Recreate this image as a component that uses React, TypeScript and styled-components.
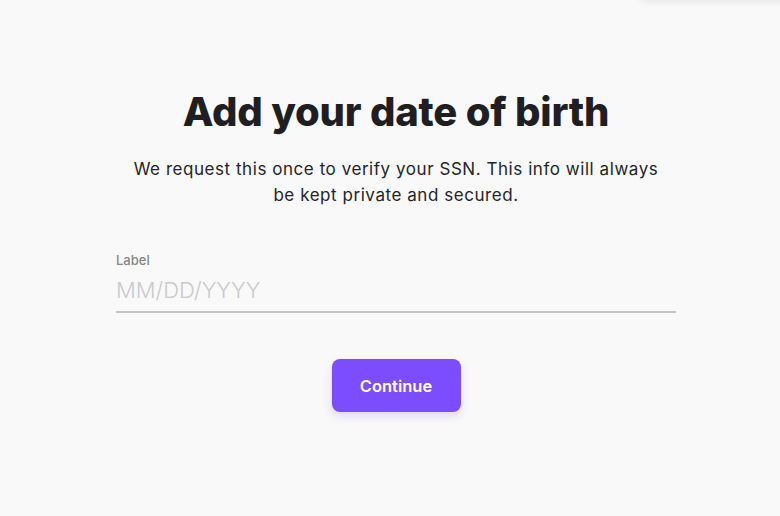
import styled, { createGlobalStyle } from 'styled-components';

const GlobalStyle = createGlobalStyle`
  html, body {
    margin: 0;
    padding: 0;
    background: #f9f9f9;
    font-family: Inter, "Noto Sans", sans-serif;
    overflow: hidden;
  }
`;

export default function App() {
  return (
    <Page>
      <GlobalStyle />
      <Toast />
      <Content>
        <Title>Add your date of birth</Title>
        <Subtitle>
          We request this once to verify your SSN. This info will always be
          kept private and secured.
        </Subtitle>
        <Field>
          <FieldLabel htmlFor="dob">Label</FieldLabel>
          <DateInput id="dob" placeholder="MM/DD/YYYY" />
        </Field>
        <ContinueButton type="button">Continue</ContinueButton>
      </Content>
    </Page>
  );
}

const Page = styled('div')`
  position: relative;
  width: 780px;
  height: 516px;
  background: #f9f9f9;
`;

const Toast = styled('div')`
  position: absolute;
  top: -60px;
  right: -20px;
  width: 160px;
  height: 60px;
  border-radius: 8px;
  background: #f9f9f9;
  box-shadow: 0 2px 8px rgba(0, 0, 0, 0.08);
`;

const Content = styled('main')`
  width: 560px;
  margin-left: 116px;
  padding-top: 90px;
  display: flex;
  flex-direction: column;
  align-items: center;
`;

const Title = styled('h1')`
  margin: 0;
  font-size: 40px;
  font-weight: 800;
  line-height: 44px;
  color: #1f1f23;
  letter-spacing: -0.2px;
  white-space: nowrap;
`;

const Subtitle = styled('p')`
  margin: 22px 0 0;
  width: 532px;
  font-size: 17px;
  line-height: 26px;
  letter-spacing: 0.55px;
  text-align: center;
  color: #242428;
`;

const Field = styled('div')`
  align-self: stretch;
  margin-top: 44px;
  display: flex;
  flex-direction: column;
`;

const FieldLabel = styled('label')`
  font-size: 13px;
  font-weight: 500;
  line-height: 16px;
  color: #85858a;
`;

const DateInput = styled('input')`
  margin-top: 9px;
  padding: 0 0 8px;
  border: none;
  border-bottom: 2px solid #c4c4c4;
  background: transparent;
  font-family: inherit;
  font-size: 22px;
  line-height: 26px;
  color: #1f1f23;
  outline: none;

  &::placeholder {
    color: #c9c9cc;
    font-weight: 300;
  }
`;

const ContinueButton = styled('button')`
  margin-top: 46px;
  width: 129px;
  height: 53px;
  border: none;
  border-radius: 8px;
  background: #7b4dff;
  color: #ffffff;
  font-family: inherit;
  font-size: 16.5px;
  font-weight: 600;
  box-shadow: 0 4px 10px rgba(123, 77, 255, 0.2);
  cursor: pointer;
`;
